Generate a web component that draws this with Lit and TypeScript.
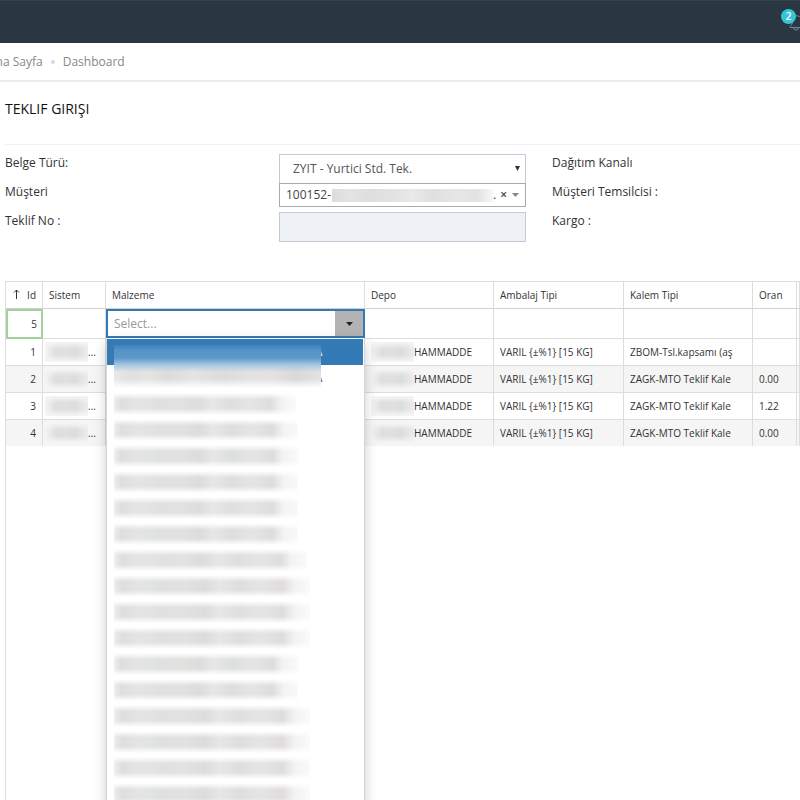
import { LitElement, html, css } from "lit";
import { customElement, property, state } from "lit/decorators.js";

interface OfferLine {
  id: number;
  depo: string;
  ambalaj: string;
  kalem: string;
  oran: string;
}

const LINES: OfferLine[] = [
  { id: 1, depo: "HAMMADDE", ambalaj: "VARIL {±%1} [15 KG]", kalem: "ZBOM-Tsl.kapsamı (aş", oran: "" },
  { id: 2, depo: "HAMMADDE", ambalaj: "VARIL {±%1} [15 KG]", kalem: "ZAGK-MTO Teklif Kale", oran: "0.00" },
  { id: 3, depo: "HAMMADDE", ambalaj: "VARIL {±%1} [15 KG]", kalem: "ZAGK-MTO Teklif Kale", oran: "1.22" },
  { id: 4, depo: "HAMMADDE", ambalaj: "VARIL {±%1} [15 KG]", kalem: "ZAGK-MTO Teklif Kale", oran: "0.00" },
];

// Widths of the masked material names, in list order.
const MASKED = [182, 184, 184, 184, 184, 184, 193, 196, 196, 196, 184, 184, 196, 196, 196, 196, 196];

@customElement("top-bar")
class TopBar extends LitElement {
  static styles = css`
    :host {
      display: flex;
      flex: none;
      justify-content: flex-end;
      height: 43px;
      background: #2b3643;
      border-top: 1px solid #364150;
      box-sizing: border-box;
      overflow: hidden;
    }
    .bell {
      position: relative;
      width: 24px;
      margin: 0 -10px 0 0;
      padding: 0;
      border: 0;
      background: none;
    }
    .bell svg {
      position: absolute;
      left: 3px;
      top: 13px;
    }
    .badge {
      position: absolute;
      left: -5px;
      top: 8px;
      width: 15px;
      height: 15px;
      border-radius: 50%;
      background: #36c6d3;
      color: #fff;
      font: 600 10px/15px "Open Sans", sans-serif;
      text-align: center;
    }
  `;
  render() {
    return html`<button class="bell" aria-label="Bildirimler">
      <svg width="17" height="17" viewBox="0 0 17 17" fill="none" stroke="#79869a">
        <path d="M1 13.500v-1c2-1.500 2.500-3 2.500-6a4.500 4.500 0 0 1 7-4c2 1 2 2.500 2 4 0 3 1 4.500 3 6v1zM4.500 13.500a2.500 2.500 0 0 0 5 0" />
      </svg>
      <span class="badge">2</span>
    </button>`;
  }
}

@customElement("offer-form")
class OfferForm extends LitElement {
  static styles = css`
    :host {
      display: grid;
      grid-template-columns: 274fr 247fr 274fr;
      grid-auto-rows: 29px;
      padding-top: 9px;
      border-top: 1px solid #eef1f5;
      font: 12px/18px "Open Sans", sans-serif;
      color: #333;
    }
    .side {
      padding-left: 26px;
    }
    .field {
      position: relative;
      display: flex;
    }
    .native,
    .readonly {
      flex: 1;
      min-width: 0;
      box-sizing: border-box;
      height: 30px;
      margin: 0;
      border: 1px solid #c2cad8;
      border-radius: 0;
      font: inherit;
      color: #555;
    }
    .native {
      appearance: none;
      background: #fff;
      padding: 0 13px;
    }
    .readonly {
      background: #eef1f5;
    }
    .caret {
      position: absolute;
      right: 6px;
      top: 12px;
      pointer-events: none;
    }
    .combo {
      display: flex;
      align-items: center;
      flex: 1;
      min-width: 0;
      height: 24px;
      box-sizing: border-box;
      border: 1px solid #aaa;
      background: #fff;
      padding: 0 6px;
      color: #444;
    }
    .mask {
      flex: 1;
      height: 13px;
      margin-left: 1px;
      background: linear-gradient(to right, #dcdcdc, #e4e4e4 12%, #dedede 22%, #e2e2e0 38%, #e9e9e9 50%, #e0e0e0 62%, #e6e6e6 78%, #e2e2e2 90%, #f8f8f8);
    }
    .clear {
      border: 0;
      background: none;
      padding: 0;
      margin: 0 5px 0 4px;
      font: 600 12px/18px "Open Sans", sans-serif;
      color: #444;
    }
  `;
  render() {
    return html`
      <label for="belge">Belge Türü:</label>
      <div class="field">
        <select id="belge" class="native">
          <option>ZYIT - Yurtici Std. Tek.</option>
        </select>
        <svg class="caret" width="5" height="5"><path d="M0 0h5L2.500 5z" fill="#333" /></svg>
      </div>
      <span class="side">Dağıtım Kanalı</span>
      <span id="musteri">Müşteri</span>
      <div class="field">
        <div class="combo" role="combobox" tabindex="0" aria-expanded="false" aria-labelledby="musteri">
          <span>100152-</span><span class="mask"></span><span>.</span>
          <button class="clear" aria-label="Temizle">×</button>
          <svg width="7" height="4"><path d="M0 0h7L3.500 4z" fill="#888" /></svg>
        </div>
      </div>
      <span class="side">Müşteri Temsilcisi :</span>
      <label for="teklif">Teklif No :</label>
      <div class="field"><input id="teklif" class="readonly" readonly /></div>
      <span class="side">Kargo :</span>
    `;
  }
}

@customElement("material-picker")
class MaterialPicker extends LitElement {
  @property({ type: Boolean }) open = true;

  static styles = css`
    :host {
      position: relative;
      display: block;
      font: 12px/16px "Open Sans", sans-serif;
    }
    .box {
      display: flex;
      height: 29px;
      box-sizing: border-box;
      border: 1px solid #337ab7;
      outline: 1px solid #337ab7;
      outline-offset: -2px;
      background: #fff;
    }
    .query {
      flex: 1;
      min-width: 0;
      border: 0;
      outline: 0;
      padding: 0 7px;
      background: none;
      font: inherit;
    }
    .query::placeholder {
      color: #999;
    }
    .toggle {
      display: grid;
      place-items: center;
      width: 28px;
      margin: 1px;
      margin-left: 0;
      padding: 0;
      border: 0;
      background: #b3b3b3;
    }
    .list {
      position: absolute;
      z-index: 2;
      top: 100%;
      left: 0;
      right: 0;
      margin: 0;
      padding: 1px 1px 0 0;
      border: 1px solid #d5d5d5;
      border-top: 0;
      box-sizing: border-box;
      list-style: none;
      background: #fff;
      box-shadow: 0 4px 12px rgba(0, 0, 0, 0.2);
    }
    .item {
      height: 26px;
      display: flex;
      align-items: center;
      padding-left: 7px;
      font-size: 10px;
      color: #333;
    }
    .item.current {
      background: #337ab7;
      color: #fff;
    }
    .tail {
      margin-left: 202px;
    }
    .mask {
      height: 22px;
      background: linear-gradient(to bottom, #fff, #fff0 30%, #fff0 70%, #fff),
        linear-gradient(to right, #fff0 86%, #fff9 92%, #fffc),
        linear-gradient(to right, #eee, #dedee0 4%, #e5e5e6 13%, #dfe1e0 25%, #e2e2e1 36%, #dcdcdc 46%, #e7e7e7 54%, #dddfde 64%, #e6e5e6 75%, #dfdcde 86%, #e4e4e4);
    }
    .lead {
      position: absolute;
      left: 7px;
      top: 7px;
      width: 207px;
      height: 43px;
      background: linear-gradient(to bottom, #fff0 22px, #fff0 34px, #fff),
        linear-gradient(to bottom, #3b82bd, #5593c6 5px, #5c98c9 13px, #a9c8e3 20px, #fff0 27px),
        linear-gradient(to right, #e9e9e9, #dfdfdf 8%, #e4e4e2 16%, #dbdbdb 26%, #e4e4e4 38%, #dcdcdc 54%, #e3e3e3 66%, #e5e1e3 76%, #d8d8d8 88%, #e2e2e2);
    }
  `;
  render() {
    return html`
      <div class="box">
        <input class="query" placeholder="Select..." aria-label="Malzeme" />
        <button class="toggle" aria-label="Listeyi aç" @click=${() => (this.open = !this.open)}>
          <svg width="7" height="4"><path d="M0 0h7L3.500 4z" fill="#222" /></svg>
        </button>
      </div>
      ${this.open
        ? html`<ul class="list" role="listbox">
            <li class="item current" role="option" aria-selected="true"><span class="tail">A</span></li>
            <li class="item" role="option"><span class="tail">A</span></li>
            ${MASKED.map(
              (w) => html`<li class="item" role="option"><span class="mask" style="width:${w}px"></span></li>`
            )}
            <span class="lead"></span>
          </ul>`
        : ""}
    `;
  }
}

@customElement("offer-grid")
class OfferGrid extends LitElement {
  @state() lines = LINES;

  static styles = css`
    :host {
      display: block;
      border-left: 1px solid #ddd;
      border-top: 1px solid #ddd;
    }
    .grid {
      width: 100%;
      table-layout: fixed;
      border-collapse: separate;
      border-spacing: 0;
      font: 10px/16px "Open Sans", sans-serif;
      color: #333;
    }
    .c-id { width: 37px; }
    .c-sistem { width: 63px; }
    .c-malzeme { width: 259px; }
    .c-depo { width: 129px; }
    .c-ambalaj { width: 130px; }
    .c-kalem { width: 129px; }
    .c-oran { width: 44px; }
    th,
    td {
      box-sizing: border-box;
      height: 27px;
      padding: 0 6px;
      border-right: 1px solid #ddd;
      border-bottom: 1px solid #ddd;
      font-weight: 400;
      text-align: left;
      white-space: nowrap;
    }
    th {
      border-bottom-color: #d0d0d0;
    }
    .num {
      text-align: right;
    }
    .edit td {
      height: 30px;
    }
    .edit .picker {
      padding: 0;
      border-right: 0;
      vertical-align: top;
    }
    .edit .num {
      border: 2px solid #a3d39c;
      padding-right: 4px;
    }
    .alt td {
      background: #f5f5f5;
    }
    .line:last-child td {
      height: 26px;
      border-bottom: 0;
    }
    .arrow {
      margin-right: 4px;
    }
    .masked {
      display: flex;
      align-items: center;
      overflow: hidden;
    }
    .mask {
      flex: none;
      width: 43px;
      height: 20px;
      background: linear-gradient(to bottom, #f6f6f6, #f6f6f600 35%, #f6f6f600 65%, #f6f6f6),
        linear-gradient(to right, #f4f4f4, #dededf 25%, #e0e0e0 50%, #dcdcdc 70%, #ececec);
    }
    .sistem {
      margin-left: -4px;
    }
  `;
  render() {
    return html`
      <table class="grid">
        <colgroup>
          <col class="c-id" /><col class="c-sistem" /><col class="c-malzeme" /><col class="c-depo" />
          <col class="c-ambalaj" /><col class="c-kalem" /><col class="c-oran" /><col />
        </colgroup>
        <thead>
          <tr>
            <th class="num">
              <svg class="arrow" width="7" height="10" fill="none" stroke="#333"><path d="M3.500 10V1M1 3.500 3.500 1 6 3.500" /></svg>
              Id
            </th>
            <th>Sistem</th>
            <th>Malzeme</th>
            <th>Depo</th>
            <th>Ambalaj Tipi</th>
            <th>Kalem Tipi</th>
            <th>Oran</th>
            <th></th>
          </tr>
        </thead>
        <tbody>
          <tr class="edit">
            <td class="num">5</td>
            <td></td>
            <td class="picker"><material-picker></material-picker></td>
            <td></td><td></td><td></td><td></td><td></td>
          </tr>
          ${this.lines.map(
            (l, i) => html`<tr class="line ${i % 2 ? "alt" : ""}">
              <td class="num">${l.id}</td>
              <td><div class="masked sistem"><span class="mask"></span>...</div></td>
              <td></td>
              <td><div class="masked"><span class="mask"></span>${l.depo}</div></td>
              <td>${l.ambalaj}</td>
              <td>${l.kalem}</td>
              <td>${l.oran}</td>
              <td></td>
            </tr>`
          )}
        </tbody>
      </table>
    `;
  }
}

@customElement("app-root")
class AppRoot extends LitElement {
  static styles = css`
    :host {
      display: flex;
      flex-direction: column;
      height: 100vh;
      overflow: hidden;
      background: #fff;
      font: 12px/18px "Open Sans", sans-serif;
      color: #333;
    }
    .crumbs {
      display: flex;
      align-items: center;
      flex: none;
      gap: 8px;
      height: 37px;
      margin-left: -12px;
      border-bottom: 2px solid #e7ecf1;
      color: #888;
    }
    .crumbs a {
      color: inherit;
      text-decoration: none;
    }
    .dot {
      width: 4px;
      height: 4px;
      border-radius: 50%;
      background: #d5d9de;
    }
    .page {
      flex: 1;
      display: flex;
      flex-direction: column;
      padding-left: 5px;
    }
    .title {
      margin: 0;
      padding: 17px 0 26px;
      font: 500 14px/19px "Open Sans", sans-serif;
      color: #111;
    }
    .lines {
      flex: 1;
      margin-top: 40px;
    }
  `;
  render() {
    return html`
      <top-bar></top-bar>
      <nav class="crumbs">
        <a href="#">Ana Sayfa</a><span class="dot"></span><a href="#">Dashboard</a>
      </nav>
      <main class="page">
        <h1 class="title">TEKLIF GIRIŞI</h1>
        <offer-form></offer-form>
        <offer-grid class="lines"></offer-grid>
      </main>
    `;
  }
}
